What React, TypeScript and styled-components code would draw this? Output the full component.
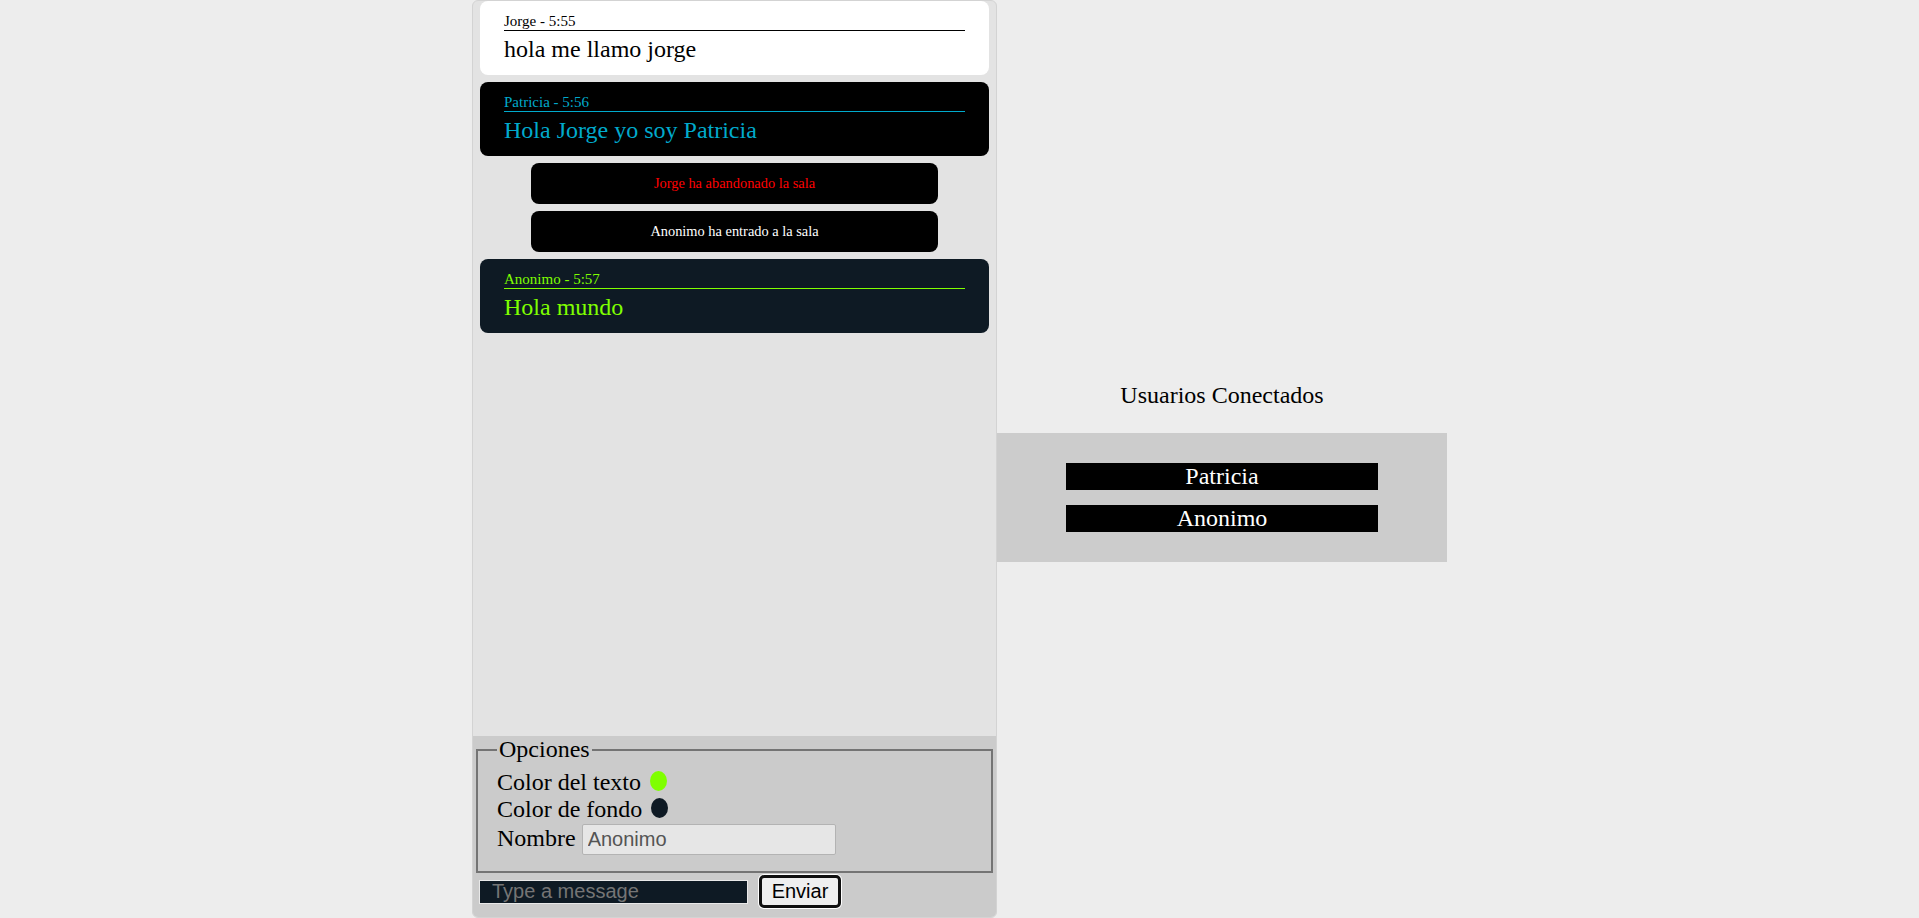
import React from "react";
import styled, { createGlobalStyle } from "styled-components";

const GlobalStyle = createGlobalStyle`
  html, body {
    margin: 0;
    padding: 0;
    background: #ededed;
    font-family: "Liberation Serif", "Times New Roman", serif;
    font-size: 16px;
  }
`;

const Page = styled.div`
  display: flex;
  justify-content: center;
  align-items: center;
  height: 100vh;
`;

const ChatPanel = styled.div`
  align-self: stretch;
  width: 525px;
  box-sizing: border-box;
  border: 1px solid #d3d3d3;
  border-radius: 6px;
  overflow: hidden;
  display: flex;
  flex-direction: column;
  background: #e3e3e3;
`;

const MessageList = styled.div`
  flex: 1;
  display: flex;
  flex-direction: column;
  gap: 7px;
  padding: 0 7px;
  overflow: hidden;
`;

const Card = styled.div<{ $bg: string; $fg: string }>`
  background: ${(p) => p.$bg};
  color: ${(p) => p.$fg};
  border-radius: 8px;
  padding: 12px 24px;
`;

const CardHeader = styled.div`
  font-size: 15px;
  border-bottom: 1px solid currentColor;
`;

const CardText = styled.div`
  font-size: 24px;
  margin-top: 5px;
`;

const Notice = styled.div<{ $fg: string }>`
  align-self: center;
  width: 80%;
  box-sizing: border-box;
  background: #000;
  color: ${(p) => p.$fg};
  border-radius: 8px;
  padding: 12px;
  text-align: center;
  font-size: 14.4px;
`;

const Bottom = styled.div`
  background: #cbcbcb;
  padding: 0 0 9px;
`;

const Options = styled.fieldset`
  margin: 0 3px;
  padding: 6px 18px 16px 19px;
  border: 2px solid #747474;
  min-width: 0;
  font-size: 24px;
`;

const Legend = styled.legend`
  padding: 0 2px;
`;

const OptionRow = styled.div<{ $gap?: number }>`
  line-height: 26.5px;
  margin-top: ${(p) => p.$gap ?? 0}px;
`;

const Swatch = styled.span<{ $color: string }>`
  display: inline-block;
  width: 17px;
  height: 20px;
  border-radius: 50%;
  background: ${(p) => p.$color};
  margin-left: 3px;
  vertical-align: -1px;
`;

const NameInput = styled.input`
  font: 20px "Liberation Sans", Arial, sans-serif;
  width: 254px;
  height: 31px;
  box-sizing: border-box;
  padding: 3px 5px;
  margin: 0;
  border: 1px solid #b3b3b3;
  border-radius: 2px;
  background: #e6e6e6;
  color: #545454;
  vertical-align: baseline;
  outline: none;
`;

const SendRow = styled.form`
  display: flex;
  align-items: center;
  gap: 11px;
  margin: 2px 0 0;
  padding-left: 6px;
`;

const MessageInput = styled.input`
  width: 269px;
  height: 24px;
  box-sizing: border-box;
  margin: 0;
  border: 1px solid #e9e9e9;
  background: #0e1a24;
  padding: 0 12px;
  font: 20px "Liberation Sans", Arial, sans-serif;
  color: #fff;
  outline: none;
  &::placeholder {
    color: #757575;
  }
`;

const SendButton = styled.button`
  width: 82px;
  height: 33px;
  box-sizing: border-box;
  margin: 0;
  padding: 0;
  border: 3px solid #101010;
  border-radius: 5px;
  box-shadow: 0 0 0 1px #fff;
  background: #efefef;
  font: 20px "Liberation Sans", Arial, sans-serif;
  color: #000;
`;

const UsersColumn = styled.div`
  width: 450px;
`;

const UsersTitle = styled.div`
  font-size: 24px;
  text-align: center;
  margin: 25px 0 24px;
  color: #000;
`;

const UsersBox = styled.div`
  background: #cccccc;
  padding: 30px 0;
  display: flex;
  flex-direction: column;
  align-items: center;
  gap: 15px;
`;

const UserTag = styled.div`
  width: 312px;
  height: 27px;
  line-height: 27px;
  background: #000;
  color: #fff;
  font-size: 24px;
  text-align: center;
`;

type Msg =
  | { kind: "chat"; name: string; time: string; text: string; bg: string; fg: string }
  | { kind: "notice"; text: string; fg: string };

const messages: Msg[] = [
  { kind: "chat", name: "Jorge", time: "5:55", text: "hola me llamo jorge", bg: "#ffffff", fg: "#000000" },
  { kind: "chat", name: "Patricia", time: "5:56", text: "Hola Jorge yo soy Patricia", bg: "#000000", fg: "#00aacc" },
  { kind: "notice", text: "Jorge ha abandonado la sala", fg: "#ff0000" },
  { kind: "notice", text: "Anonimo ha entrado a la sala", fg: "#ffffff" },
  { kind: "chat", name: "Anonimo", time: "5:57", text: "Hola mundo", bg: "#0e1a24", fg: "#7fff00" },
];

const users = ["Patricia", "Anonimo"];

export default function App() {
  return (
    <>
      <GlobalStyle />
      <Page>
        <ChatPanel>
          <MessageList>
            {messages.map((m, i) =>
              m.kind === "chat" ? (
                <Card key={i} $bg={m.bg} $fg={m.fg}>
                  <CardHeader>
                    {m.name} - {m.time}
                  </CardHeader>
                  <CardText>{m.text}</CardText>
                </Card>
              ) : (
                <Notice key={i} $fg={m.fg}>
                  {m.text}
                </Notice>
              )
            )}
          </MessageList>
          <Bottom>
            <Options>
              <Legend>Opciones</Legend>
              <OptionRow>
                Color del texto <Swatch $color="#7fff00" />
              </OptionRow>
              <OptionRow>
                Color de fondo <Swatch $color="#0e1a24" />
              </OptionRow>
              <OptionRow $gap={2}>
                Nombre <NameInput defaultValue="Anonimo" />
              </OptionRow>
            </Options>
            <SendRow onSubmit={(e) => e.preventDefault()}>
              <MessageInput placeholder="Type a message" />
              <SendButton type="submit">Enviar</SendButton>
            </SendRow>
          </Bottom>
        </ChatPanel>
        <UsersColumn>
          <UsersTitle>Usuarios Conectados</UsersTitle>
          <UsersBox>
            {users.map((u) => (
              <UserTag key={u}>{u}</UserTag>
            ))}
          </UsersBox>
        </UsersColumn>
      </Page>
    </>
  );
}
